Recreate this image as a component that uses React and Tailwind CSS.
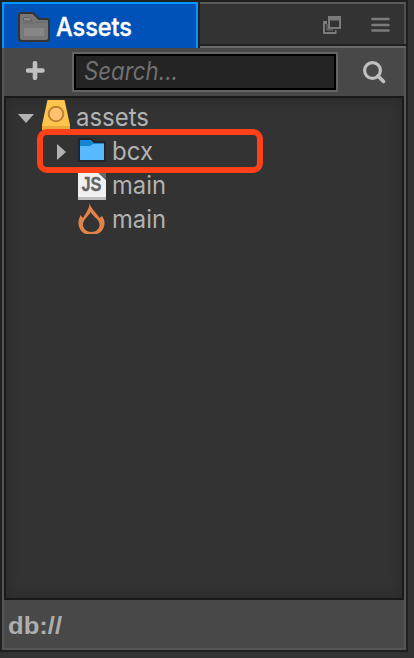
function FolderIcon() {
  return (
    <svg className="h-[30px] w-8 shrink-0" viewBox="0 0 32 30">
      <path d="M3 1H15L21 7H29Q31 7 31 9V26Q31 29 28 29H4Q1 29 1 26V3Q1 1 3 1Z" fill="#777" stroke="#343434" strokeWidth="2" />
      <path d="M5.500 5.500H11.500L14 9H5.500Z" fill="#8a8a8a" stroke="#606060" strokeWidth="1" />
      <path d="M5 11H16L19 10H28" fill="none" stroke="#6a6a6a" strokeWidth="1" />
      <rect x="6" y="16" width="20" height="8" fill="#888" />
    </svg>
  );
}

function MountIcon() {
  return (
    <svg className="h-[30px] w-7 shrink-0" viewBox="0 0 28 30">
      <path d="M5.500 0H22.500L28 25V30H0V25Z" fill="#ffc54c" />
      <path d="M0 26H28V30H0Z" fill="#e8ab3a" />
      <circle cx="14" cy="14" r="7.300" fill="#ffc070" stroke="#b9822e" strokeWidth="2" />
    </svg>
  );
}

function BlueFolderIcon() {
  return (
    <svg className="h-6 w-7 shrink-0" viewBox="0 0 28 24">
      <path d="M1 1H13L16 4H27V23H1Z" fill="#58b9ff" stroke="#20262b" strokeWidth="2" />
      <path d="M2 2H12L15.500 5H26V6H15L12 8H2Z" fill="#1786d0" />
    </svg>
  );
}

function ScriptIcon() {
  return (
    <svg className="h-7 w-7 shrink-0" viewBox="0 0 28 28">
      <path d="M0 0H20L28 8V28H0Z" fill="#f0f0f0" />
      <path d="M19 0H28V8Z" fill="#666" />
      <path d="M0 25H28V28H0Z" fill="#bdbdbd" />
      <text x="3.500" y="18.500" textLength="20" lengthAdjust="spacingAndGlyphs" fontSize="20" fontWeight="700" fill="#626262" stroke="#626262" strokeWidth="0.300" fontFamily="'Liberation Sans', sans-serif">JS</text>
    </svg>
  );
}

function FireIcon() {
  return (
    <svg className="h-8 w-7 shrink-0" viewBox="0 0 28 32" fill="none">
      <path d="M11.500 1C11.500 7 7.500 11 5 16L2.500 13C1.500 16 0 19 0.500 22C1 27 4 31 8 32H18.500C23 31 26 27 26.500 22C27 19 25.500 16 24 14L21.500 16C19 11 13 7 11.500 1Z" fill="#e18347" />
      <path d="M12.500 10C11 14 5.500 17 5 22C4.500 26.500 9 30 13.500 30C18 30 22 26.500 21.500 22C21 17 14.500 14 12.500 10Z" fill="#333" />
    </svg>
  );
}

function Label({ children, width }) {
  return (
    <svg className="h-8 shrink-0 overflow-visible" width={width} height="32">
      <text x="0" y="24" textLength={width} lengthAdjust="spacingAndGlyphs" fontSize="25" fill="#b2b2b2">{children}</text>
    </svg>
  );
}

function TabBar() {
  return (
    <div className="flex h-[46px]">
      <div className="flex w-[196px] items-start border-x-2 border-t-2 border-[#0096ff] bg-[#0052b9] pt-2 pl-[14px]">
        <FolderIcon />
        <svg className="ml-1.5 h-[34px] w-20 overflow-visible" viewBox="0 0 80 34">
          <text x="0" y="24" textLength="76" lengthAdjust="spacingAndGlyphs" fontSize="25" fontWeight="500" stroke="white" strokeWidth="0.400" fill="white">Assets</text>
        </svg>
      </div>
      <div className="flex flex-1 flex-col pl-0.5">
        <div className="flex h-[42px] items-start justify-end border-2 border-b-0 border-l-0 border-t-[#5a5a5a] border-r-[#505050] bg-[#333]">
          <svg className="mt-3 h-[18px] w-[18px]" viewBox="0 0 18 18">
            <path d="M0 5H4V8H2V16H12V14H13.500V18H0Z" fill="#7b7b7b" />
            <path d="M4 8V14H10" fill="none" stroke="#7b7b7b" strokeWidth="1" />
            <path fillRule="evenodd" d="M5 0H18V13H5ZM7 4.500V11H16V4.500Z" fill="#7b7b7b" />
          </svg>
          <svg className="mt-[13px] mr-[14px] ml-[30px] h-4 w-[19px]" viewBox="0 0 19 16">
            <path d="M1.500 2H17.500M1.500 8H17.500M1.500 13.500H17.500" stroke="#7b7b7b" strokeWidth="2.600" strokeLinecap="round" />
          </svg>
        </div>
        <div className="h-0.5 bg-[#202020]" />
        <div className="h-0.5 bg-[#696969]" />
      </div>
    </div>
  );
}

function Toolbar() {
  return (
    <div className="flex h-12 items-start">
      <svg className="mt-[13px] ml-[22px] h-[19px] w-[19px]" viewBox="0 0 19 19">
        <path d="M9 2.200V16.800M2 9.500H16.500" stroke="#c0c0c0" strokeWidth="4.600" strokeLinecap="round" />
      </svg>
      <div className="mt-1 ml-[27px] h-10 w-[266px] border-2 border-[#656565]">
        <div className="h-full border-2 border-black bg-[#242424] pl-2">
          <svg className="h-8 w-[120px] overflow-visible" viewBox="0 0 120 32">
            <text x="0" y="24" textLength="94" lengthAdjust="spacingAndGlyphs" fontSize="25" fontStyle="italic" fill="#707070">Search...</text>
          </svg>
        </div>
      </div>
      <svg className="mt-[13px] ml-[25px] h-[23px] w-[23px]" viewBox="0 0 23 23" fill="none">
        <circle cx="9.500" cy="9.500" r="7.900" stroke="#c0c0c0" strokeWidth="3.200" />
        <path d="M15 15L20.500 20.500" stroke="#c0c0c0" strokeWidth="3.600" strokeLinecap="round" />
      </svg>
    </div>
  );
}

export default function App() {
  return (
    <div className="h-[658px] w-[414px] overflow-hidden bg-[#333] font-['Inter','Liberation_Sans',sans-serif]">
      <div className="h-[652px] w-[408px] bg-[#202020] p-0.5">
        <TabBar />
        <div className="h-[602px] border-2 border-t-0 border-[#555] bg-[#484848]">
          <Toolbar />
          <div className="relative h-[504px] border-2 border-[#1a1a1a] bg-[#333] pt-0.5 shadow-[inset_0_0_16px_rgba(0,0,0,0.22)]">
            <div className="flex h-[34px] items-start">
              <svg className="mt-[14px] ml-3 h-[9px] w-4" viewBox="0 0 16 9">
                <path d="M0 0H16L8 9Z" fill="#b2b2b2" />
              </svg>
              <div className="ml-2 flex gap-1.5">
                <MountIcon />
                <div className="pt-0.5"><Label width={73}>assets</Label></div>
              </div>
            </div>
            <div className="flex h-[34px] items-start pl-[51px]">
              <svg className="mt-[10px] h-4 w-[9px]" viewBox="0 0 9 16">
                <path d="M0 0L9 8L0 16Z" fill="#b2b2b2" />
              </svg>
              <div className="mt-[4px] ml-3"><BlueFolderIcon /></div>
              <div className="ml-1.5 pt-0.5"><Label width={41}>bcx</Label></div>
            </div>
            <div className="flex h-[34px] items-start pl-[72px]">
              <div className="mt-[4px]"><ScriptIcon /></div>
              <div className="ml-[6px] pt-0.5"><Label width={54}>main</Label></div>
            </div>
            <div className="flex h-[34px] items-start pl-[72px]">
              <FireIcon />
              <div className="ml-[6px] pt-0.5"><Label width={54}>main</Label></div>
            </div>
            <div className="absolute top-[31px] left-[31px] h-[44px] w-[226px] rounded-[10px] border-6 border-[#ff411a]" />
          </div>
          <div className="flex h-12 items-start pl-1">
            <svg className="h-12 w-[60px] overflow-visible" viewBox="0 0 60 48">
              <text x="0" y="34" textLength="54" lengthAdjust="spacingAndGlyphs" fontSize="24" fontWeight="700" fontFamily="'Liberation Sans', sans-serif" fill="#aeaeae">db://</text>
            </svg>
          </div>
        </div>
      </div>
    </div>
  );
}
